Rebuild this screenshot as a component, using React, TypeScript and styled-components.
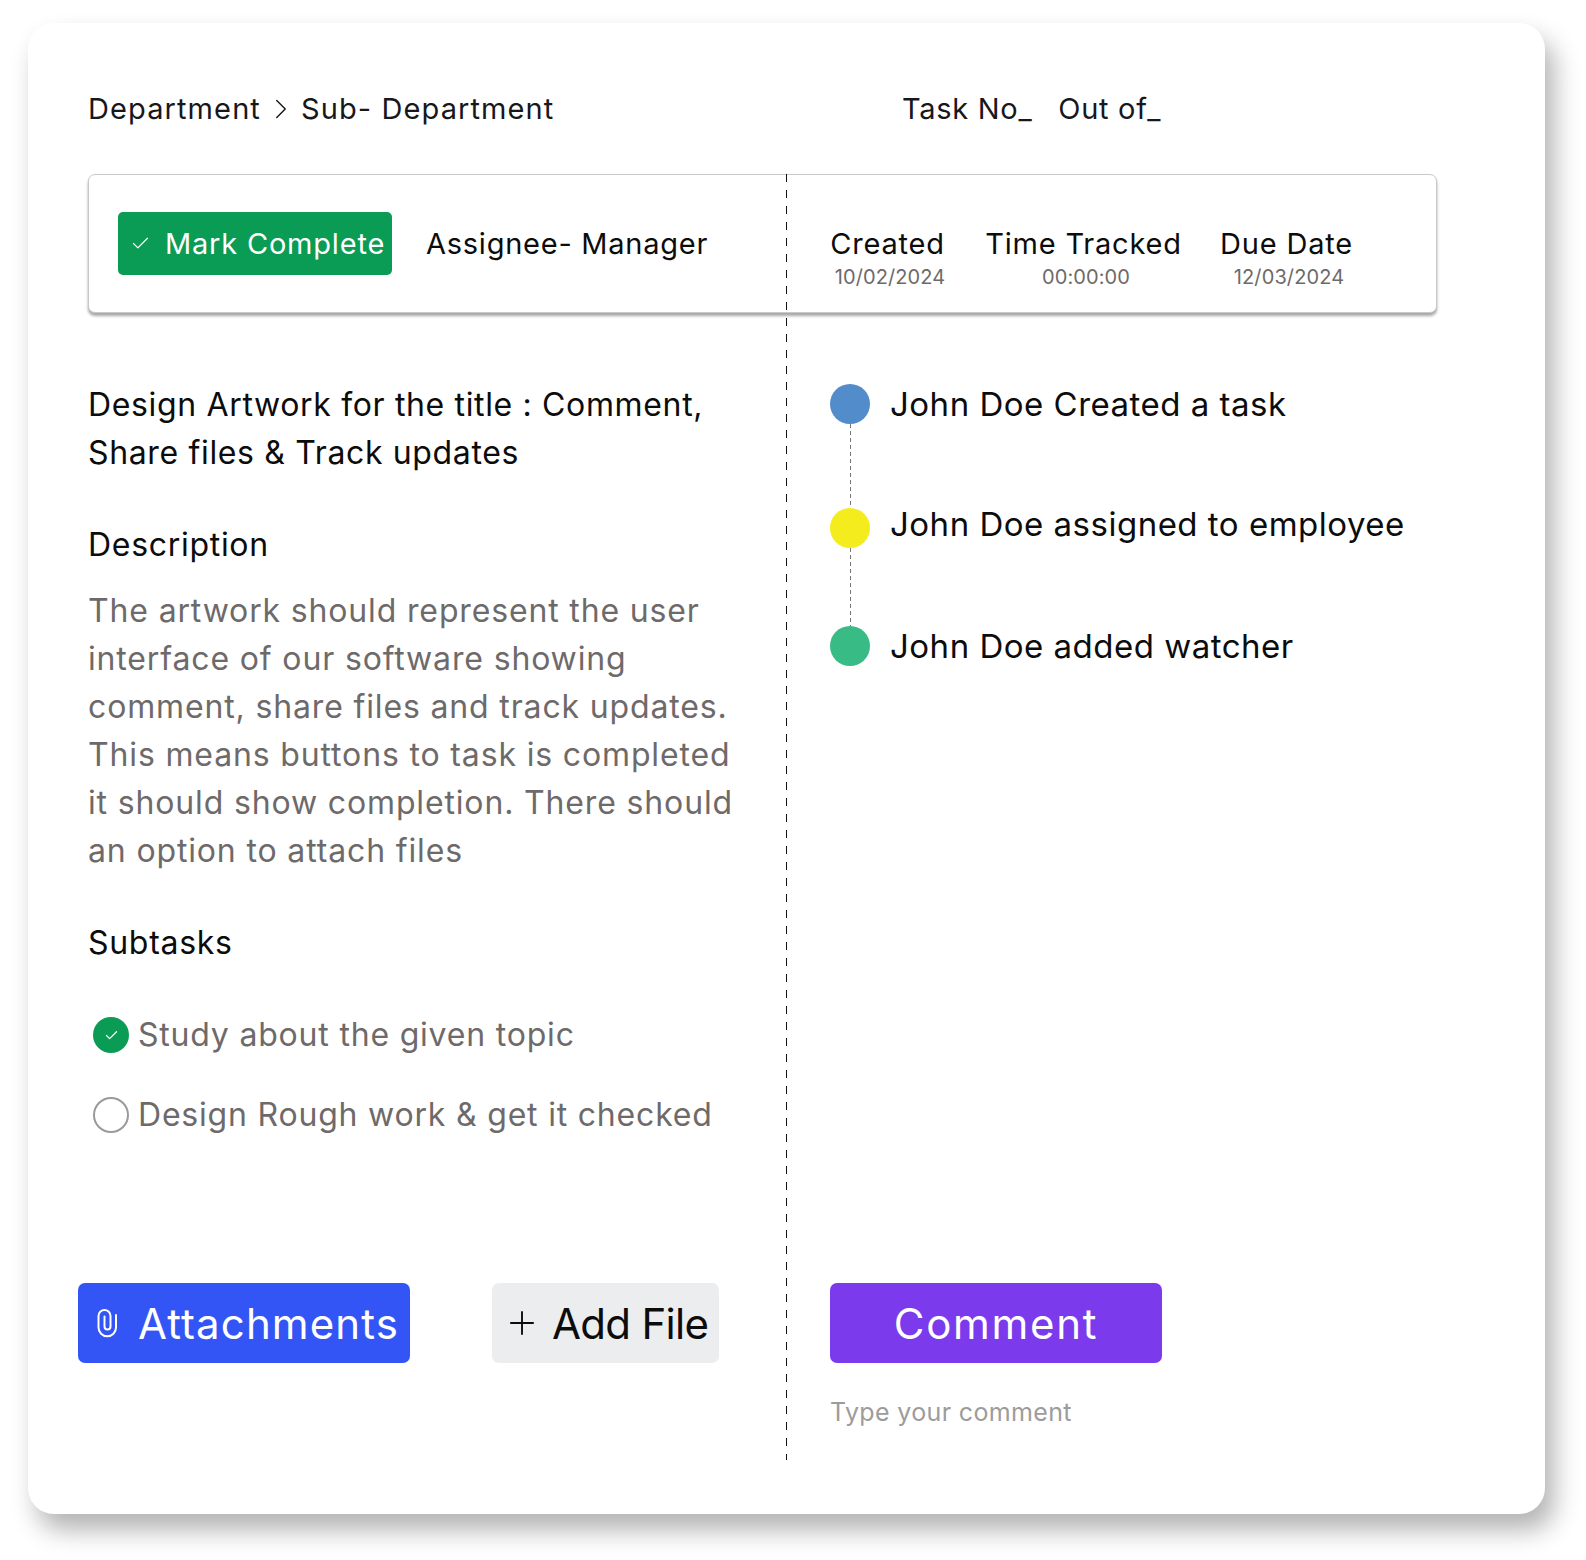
import { FunctionComponent } from "react";
import styled, { createGlobalStyle } from "styled-components";
import { Check, ChevronRight, Plus } from "lucide-react";

const GlobalStyle = createGlobalStyle`
  html, body {
    margin: 0;
    padding: 0;
    background: #fff;
  }
  body {
    font-family: Inter, "Noto Sans", "Liberation Sans", sans-serif;
    color: #0c0c0c;
  }
  * {
    box-sizing: border-box;
  }
`;

const activities = [
  { label: "John Doe Created a task", color: "#528ccb", line: 84, lift: 0 },
  { label: "John Doe assigned to employee", color: "#f4ec1c", line: 78, lift: 4 },
  { label: "John Doe added watcher", color: "#38bb84", line: 0, lift: 0 },
];

const stats = [
  { label: "Created", value: "10/02/2024" },
  { label: "Time Tracked", value: "00:00:00" },
  { label: "Due Date", value: "12/03/2024" },
];

const ClipIcon: FunctionComponent = () => (
  <svg width="24" height="30" viewBox="0 0 24 30" fill="none" stroke="#fff" strokeWidth="2" strokeLinecap="round">
    <path d="M20 7V19.500A8.750 8.750 0 0 1 2.500 19.500V8A6 6 0 0 1 14.500 8V18.500A3 3 0 0 1 8.500 18.500V8.500" />
  </svg>
);

const App: FunctionComponent = () => (
  <Page>
    <GlobalStyle />
    <Card>
      <Divider />
      <Header>
        <Breadcrumb>
          Department
          <ChevronRight size={34} strokeWidth={1} />
          Sub- Department
        </Breadcrumb>
        <TaskCount>
          <span>Task No_</span>
          <span>Out of_</span>
        </TaskCount>
      </Header>

      <InfoPanel>
        <AssigneeArea>
          <CompleteButton type="button">
            <Check size={21} strokeWidth={1.4} />
            Mark Complete
          </CompleteButton>
          <Assignee>Assignee- Manager</Assignee>
        </AssigneeArea>
        <StatList>
          {stats.map((stat) => (
            <Stat key={stat.label}>
              <StatLabel>{stat.label}</StatLabel>
              <StatValue>{stat.value}</StatValue>
            </Stat>
          ))}
        </StatList>
      </InfoPanel>

      <Columns>
        <Details>
          <Title>
            Design Artwork for the title : Comment,
            <br />
            Share files &amp; Track updates
          </Title>
          <SectionHeading $top={44}>Description</SectionHeading>
          <Description>
            The artwork should represent the user
            <br />
            interface of our software showing
            <br />
            comment, share files and track updates.
            <br />
            This means buttons to task is completed
            <br />
            it should show completion. There should
            <br />
            an option to attach files
          </Description>
          <SectionHeading $top={44}>Subtasks</SectionHeading>
          <SubtaskList>
            <Subtask>
              <StatusDot $done>
                <Check size={15} strokeWidth={2} />
              </StatusDot>
              Study about the given topic
            </Subtask>
            <Subtask>
              <StatusDot />
              Design Rough work &amp; get it checked
            </Subtask>
          </SubtaskList>
        </Details>
        <Timeline>
          {activities.map((item) => (
            <Activity key={item.label}>
              <Marker>
                <Dot $color={item.color} />
                {item.line > 0 && <Connector $length={item.line} />}
              </Marker>
              <ActivityText $lift={item.lift}>{item.label}</ActivityText>
            </Activity>
          ))}
        </Timeline>
      </Columns>

      <Columns>
        <FileActions>
          <AttachButton type="button">
            <ClipIcon />
            Attachments
          </AttachButton>
          <AddFileButton type="button">
            <Plus size={38} strokeWidth={1.2} />
            Add File
          </AddFileButton>
        </FileActions>
        <CommentArea>
          <CommentButton type="button">Comment</CommentButton>
          <CommentHint>Type your comment</CommentHint>
        </CommentArea>
      </Columns>
    </Card>
  </Page>
);

const Page = styled.div`
  width: 1586px;
  height: 1560px;
  padding: 23px 0 0 28px;
  overflow: hidden;
`;
const Card = styled.div`
  position: relative;
  width: 1517px;
  height: 1491px;
  padding: 66px 0 0 60px;
  background: #fff;
  border-radius: 26px;
  box-shadow: 9px 16px 26px rgba(0, 0, 0, 0.3);
`;
const Divider = styled.div`
  position: absolute;
  left: 758px;
  top: 151px;
  width: 1px;
  height: 1286px;
  background: linear-gradient(to bottom, #111 0 8px, transparent 8px 16px) 0 0 / 1px 16px repeat-y;
`;
const Header = styled.div`
  display: flex;
  height: 40px;
  line-height: 40px;
  font-size: 29px;
  letter-spacing: 1.1px;
  color: #17171c;
`;
const Breadcrumb = styled.div`
  display: flex;
  align-items: center;
  gap: 3px;
  width: 814px;
`;
const TaskCount = styled.div`
  display: flex;
  gap: 26px;
  letter-spacing: 0.7px;
`;
const InfoPanel = styled.div`
  display: grid;
  grid-template-columns: 698px 1fr;
  width: 1349px;
  height: 139px;
  margin-top: 45px;
  background: #fff;
  border: 1px solid #c9c9c9;
  border-radius: 7px;
  box-shadow: 0 3px 3px rgba(0, 0, 0, 0.35);
`;
const AssigneeArea = styled.div`
  display: flex;
  align-items: center;
  gap: 34px;
  padding-left: 29px;
`;
const CompleteButton = styled.button`
  display: flex;
  align-items: center;
  gap: 14px;
  width: 274px;
  height: 63px;
  padding: 0 0 0 12px;
  border: 0;
  border-radius: 5px;
  background: #0a9b55;
  color: #fff;
  font: inherit;
  font-size: 29px;
  letter-spacing: 0.8px;
  white-space: nowrap;
`;
const Assignee = styled.div`
  font-size: 29px;
  letter-spacing: 0.75px;
  color: #0c0c0c;
`;
const StatList = styled.div`
  display: grid;
  grid-template-columns: 117px 191px 131px;
  column-gap: 42px;
  padding: 51px 0 0 42px;
`;
const Stat = styled.div`
  display: flex;
  flex-direction: column;
  align-items: center;
  white-space: nowrap;
`;
const StatLabel = styled.div`
  font-size: 29px;
  line-height: 36px;
  letter-spacing: 0.8px;
  color: #0c0c0c;
`;
const StatValue = styled.div`
  font-size: 20px;
  line-height: 30px;
  padding-left: 5px;
  letter-spacing: 0.1px;
  color: #6e6a6a;
`;
const Columns = styled.div`
  display: grid;
  grid-template-columns: 699px 1fr;
`;
const Details = styled.div`
  margin-top: 68px;
`;
const Title = styled.div`
  font-size: 32px;
  line-height: 48px;
  letter-spacing: 0.65px;
  color: #0c0c0c;
  white-space: nowrap;
`;
const SectionHeading = styled.div<{ $top: number }>`
  margin-top: ${(p) => p.$top}px;
  font-size: 32px;
  line-height: 48px;
  letter-spacing: 0.7px;
  color: #0c0c0c;
`;
const Description = styled.div`
  margin-top: 18px;
  font-size: 32px;
  line-height: 48px;
  letter-spacing: 0.85px;
  color: #6e6a6a;
  white-space: nowrap;
`;
const SubtaskList = styled.div`
  display: flex;
  flex-direction: column;
  gap: 32px;
  margin-top: 44px;
`;
const Subtask = styled.div`
  display: flex;
  align-items: center;
  gap: 9px;
  padding-left: 5px;
  font-size: 32px;
  line-height: 48px;
  letter-spacing: 0.8px;
  color: #6e6a6a;
`;
const StatusDot = styled.span<{ $done?: boolean }>`
  display: flex;
  align-items: center;
  justify-content: center;
  width: 36px;
  height: 36px;
  border-radius: 50%;
  color: #fff;
  background: ${(p) => (p.$done ? "#0a9b55" : "#fff")};
  border: ${(p) => (p.$done ? "0" : "2px solid #9a9a9a")};
`;
const Timeline = styled.div`
  margin-top: 71px;
  padding-left: 43px;
`;
const Activity = styled.div`
  display: flex;
  gap: 20px;
`;
const Marker = styled.div`
  display: flex;
  flex-direction: column;
  align-items: center;
  width: 40px;
`;
const Dot = styled.span<{ $color: string }>`
  width: 40px;
  height: 40px;
  border-radius: 50%;
  background: ${(p) => p.$color};
`;
const Connector = styled.span<{ $length: number }>`
  width: 1px;
  height: ${(p) => p.$length}px;
  background: linear-gradient(to bottom, #777 0 4px, transparent 4px 7px) 0 0 / 1px 7px repeat-y;
`;
const ActivityText = styled.div<{ $lift: number }>`
  margin-top: ${(p) => -p.$lift}px;
  font-size: 33px;
  line-height: 40px;
  letter-spacing: 0.5px;
  color: #0c0c0c;
  white-space: nowrap;
`;
const FileActions = styled.div`
  display: flex;
  gap: 82px;
  margin: 144px 0 0 -10px;
`;
const ActionButton = styled.button`
  display: flex;
  align-items: center;
  height: 80px;
  border: 0;
  border-radius: 7px;
  font: inherit;
  font-size: 42px;
  white-space: nowrap;
`;
const AttachButton = styled(ActionButton)`
  gap: 18px;
  width: 332px;
  padding: 0 0 0 18px;
  background: #3355f5;
  color: #fff;
  letter-spacing: 1.1px;
`;
const AddFileButton = styled(ActionButton)`
  gap: 11px;
  width: 227px;
  padding: 0 0 0 11px;
  background: #ecedef;
  color: #0c0c0c;
  letter-spacing: -0.7px;
`;
const CommentArea = styled.div`
  margin-top: 144px;
  padding-left: 43px;
`;
const CommentButton = styled(ActionButton)`
  justify-content: center;
  width: 332px;
  background: #7c3aed;
  color: #fff;
  letter-spacing: 1.7px;
`;
const CommentHint = styled.div`
  margin-top: 29px;
  font-size: 25px;
  line-height: 40px;
  letter-spacing: 0.35px;
  color: #9c9c9c;
`;

export default App;
